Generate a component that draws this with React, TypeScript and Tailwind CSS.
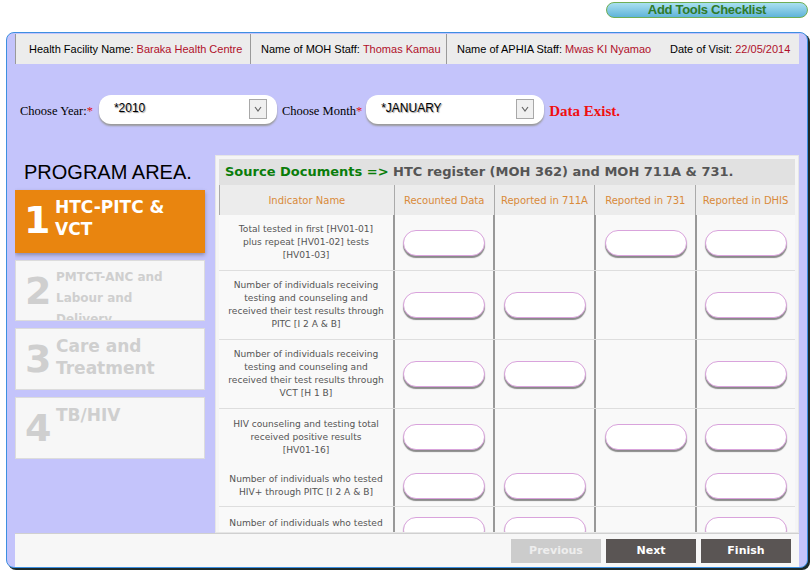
import React from 'react';

const verdana = { fontFamily: '"DejaVu Sans", Verdana, sans-serif' };

type Row = {
  lines: string[];
  h: string;
  cells: boolean[];
  last?: boolean;
};

const rows: Row[] = [
  {
    lines: ['Total tested in first [HV01-01]', 'plus repeat [HV01-02] tests', '[HV01-03]'],
    h: 'h-[56px]',
    cells: [true, false, true, true],
  },
  {
    lines: [
      'Number of individuals receiving',
      'testing and counseling and',
      'received their test results through',
      'PITC [I 2 A & B]',
    ],
    h: 'h-[69px]',
    cells: [true, true, false, true],
  },
  {
    lines: [
      'Number of individuals receiving',
      'testing and counseling and',
      'received their test results through',
      'VCT [H 1 B]',
    ],
    h: 'h-[69px]',
    cells: [true, true, false, true],
  },
  {
    lines: ['HIV counseling and testing total', 'received positive results', '[HV01-16]'],
    h: 'h-[56px]',
    cells: [true, false, true, true],
    last: true,
  },
  {
    lines: ['Number of individuals who tested', 'HIV+ through PITC [I 2 A & B]'],
    h: 'h-[42px]',
    cells: [true, true, false, true],
  },
  {
    lines: ['Number of individuals who tested', 'HIV+ through VCT [H 1 B]'],
    h: 'h-[46px]',
    cells: [true, true, false, true],
  },
];

const headers = ['Indicator Name', 'Recounted Data', 'Reported in 711A', 'Reported in 731', 'Reported in DHIS'];
const colW = ['w-[174px]', 'w-[100px]', 'w-[101px]', 'w-[101px]', 'w-[100px]'];

const Pill = () => (
  <input
    type="text"
    className="w-[82px] h-[26px] rounded-[13px] bg-white border border-[#d9a3dc] shadow-[0_2px_1px_#8a8a8a] outline-none"
  />
);

const Select = ({ value }: { value: string }) => (
  <div className="relative w-[178px] h-[29px] rounded-[12px] bg-white shadow-[0_2px_2px_#9a9a9a]">
    <span
      className="absolute left-[15px] top-[4px] text-[12px] text-black [text-shadow:1px_1px_1px_#999]"
      style={{ fontFamily: '"Liberation Sans", Arial, sans-serif' }}
    >
      {value}
    </span>
    <div className="absolute right-[10px] top-[4px] w-[18px] h-[20px] bg-[#f0f0f0] border border-[#a8a8a8] flex items-center justify-center">
      <svg width="8" height="6" viewBox="0 0 8 6">
        <path d="M1 1 L4 5 L7 1" fill="none" stroke="#666" strokeWidth="1.2" />
      </svg>
    </div>
  </div>
);

type Item = { n: string; title: string; active?: boolean; size: string; lh: string; top: string };

const items: Item[] = [
  { n: '1', title: 'HTC-PITC & VCT', active: true, size: 'text-[17px]', lh: 'leading-[22px]', top: 'h-[63px]' },
  { n: '2', title: 'PMTCT-ANC and Labour and Delivery', size: 'text-[12px]', lh: 'leading-[21px]', top: 'h-[61px]' },
  { n: '3', title: 'Care and Treatment', size: 'text-[17px]', lh: 'leading-[22px]', top: 'h-[62px]' },
  { n: '4', title: 'TB/HIV', size: 'text-[17px]', lh: 'leading-[22px]', top: 'h-[62px]' },
];

export default function App() {
  return (
    <div className="w-[811px] h-[571px] bg-white overflow-hidden" style={{ fontFamily: '"Liberation Sans", Arial, sans-serif' }}>
      <div className="h-[32px] flex justify-end pt-[2px] pr-[3px]">
        <button className="w-[202px] h-[16px] rounded-full border border-[#6fae55] bg-gradient-to-b from-[#a9e0f0] to-[#5fb4d9] text-[#2f7a2a] text-[13px] font-bold leading-[14px] tracking-[-0.3px]">
          Add Tools Checklist
        </button>
      </div>

      <div className="ml-[6px] w-[802px] h-[536px] rounded-[8px] border border-[#3d8fe0] bg-[#c4c4fb] shadow-[2px_2px_0_#1d2a2a] px-[8px] flex flex-col overflow-hidden">
        {/* visit details */}
        <div className="mt-[1px] h-[30px] flex bg-[#ececec] border-l border-[#9a9a9a] text-[11px] text-black">
          <div className="w-[235px] pl-[13px] flex items-center border-r border-[#9a9a9a]">
            Health Facility Name:&nbsp;<span className="text-[#b0102a]">Baraka Health Centre</span>
          </div>
          <div className="w-[196px] pl-[10px] flex items-center border-r border-[#9a9a9a]">
            Name of MOH Staff:&nbsp;<span className="text-[#b0102a]">Thomas Kamau</span>
          </div>
          <div className="w-[223px] pl-[10px] flex items-center">
            Name of APHIA Staff:&nbsp;<span className="text-[#b0102a]">Mwas KI Nyamao</span>
          </div>
          <div className="flex-1 flex items-center">
            Date of Visit:&nbsp;<span className="text-[#b0102a]">22/05/2014</span>
          </div>
        </div>

        {/* period */}
        <div
          className="h-[91px] pt-[31px] flex items-start text-[12.5px] text-black"
          style={{ fontFamily: '"Liberation Serif", "Times New Roman", serif' }}
        >
          <span className="ml-[5px] mr-[6px] mt-[7px]">
            Choose Year:<span className="text-[#e01010]">*</span>
          </span>
          <Select value="*2010" />
          <span className="ml-[5px] mr-[4px] mt-[7px]">
            Choose Month<span className="text-[#e01010]">*</span>
          </span>
          <Select value="*JANUARY" />
          <span className="ml-[5px] mt-[5px] text-[15px] font-bold text-[#f01010]">Data Exist.</span>
        </div>

        {/* body */}
        <div className="flex-1 flex gap-[10px] overflow-hidden">
          <div className="w-[190px] flex flex-col" style={verdana}>
            <div
              className="h-[35px] pl-[9px] pt-[5px] text-[20px] leading-[24px] text-black"
              style={{ fontFamily: '"Liberation Sans", Arial, sans-serif' }}
            >
              PROGRAM AREA.
            </div>
            <div className="flex flex-col gap-[5px]">
              {items.map((it) => (
                <div
                  key={it.n}
                  className={`${it.top} flex items-start overflow-hidden ${
                    it.active
                      ? 'bg-[#e9850f] text-white shadow-[0_2px_4px_rgba(0,0,0,0.3)]'
                      : 'bg-[#f7f7f7] border border-[#dcdcdc] text-[#cfcfcf] mt-[2px]'
                  }`}
                >
                  <span className="w-[40px] pl-[9px] pt-[8px] text-[38px] leading-[44px] font-bold shrink-0">{it.n}</span>
                  <span className={`pt-[6px] max-w-[118px] font-bold ${it.size} ${it.lh}`}>{it.title}</span>
                </div>
              ))}
            </div>
          </div>

          <div className="w-[584px] bg-[#f5f5f5] border border-[#e6e6e6] p-[3px] overflow-hidden" style={verdana}>
            <div className="h-[26px] bg-[#e1e1e1] pl-[6px] flex items-center text-[13px] font-bold text-[#555]">
              <span className="text-[#0a7d0a]">Source Documents =&gt;</span>&nbsp;HTC register (MOH 362) and MOH 711A &amp; 731.
            </div>
            <div className="flex h-[30px] bg-[#ececec] border-l border-[#aaa]">
              {headers.map((h, i) => (
                <div
                  key={h}
                  className={`${colW[i]} flex items-center justify-center text-[10px] text-[#d98a3a] ${
                    i > 0 ? 'border-l border-[#aaa]' : ''
                  }`}
                >
                  {h}
                </div>
              ))}
            </div>
            {rows.map((r, ri) => (
              <div key={ri} className={`flex ${r.h} bg-[#f9f9f9] ${r.last ? '' : 'border-b border-[#dedede]'}`}>
                <div className={`${colW[0]} px-[2px] flex flex-col items-center justify-center text-center text-[9.1px] leading-[13px] text-[#555] whitespace-nowrap`}>
                  {r.lines.map((l) => (
                    <span key={l}>{l}</span>
                  ))}
                </div>
                {r.cells.map((c, ci) => (
                  <div
                    key={ci}
                    className={`${colW[ci + 1]} border-l-2 border-[#999] flex items-center justify-center`}
                  >
                    {c && <Pill />}
                  </div>
                ))}
              </div>
            ))}
          </div>
        </div>

        {/* footer */}
        <div className="h-[34px] shrink-0 bg-[#f7f7f7] border-t border-[#d0d0d0] flex justify-end items-start pt-[5px] pr-[8px] gap-[5px]" style={verdana}>
          <button className="w-[90px] h-[24px] bg-[#cccccc] text-[#eeeeee] text-[11px] font-bold">Previous</button>
          <button className="w-[90px] h-[24px] bg-[#5a5554] text-white text-[11px] font-bold">Next</button>
          <button className="w-[90px] h-[24px] bg-[#5a5554] text-white text-[11px] font-bold">Finish</button>
        </div>
      </div>
    </div>
  );
}
